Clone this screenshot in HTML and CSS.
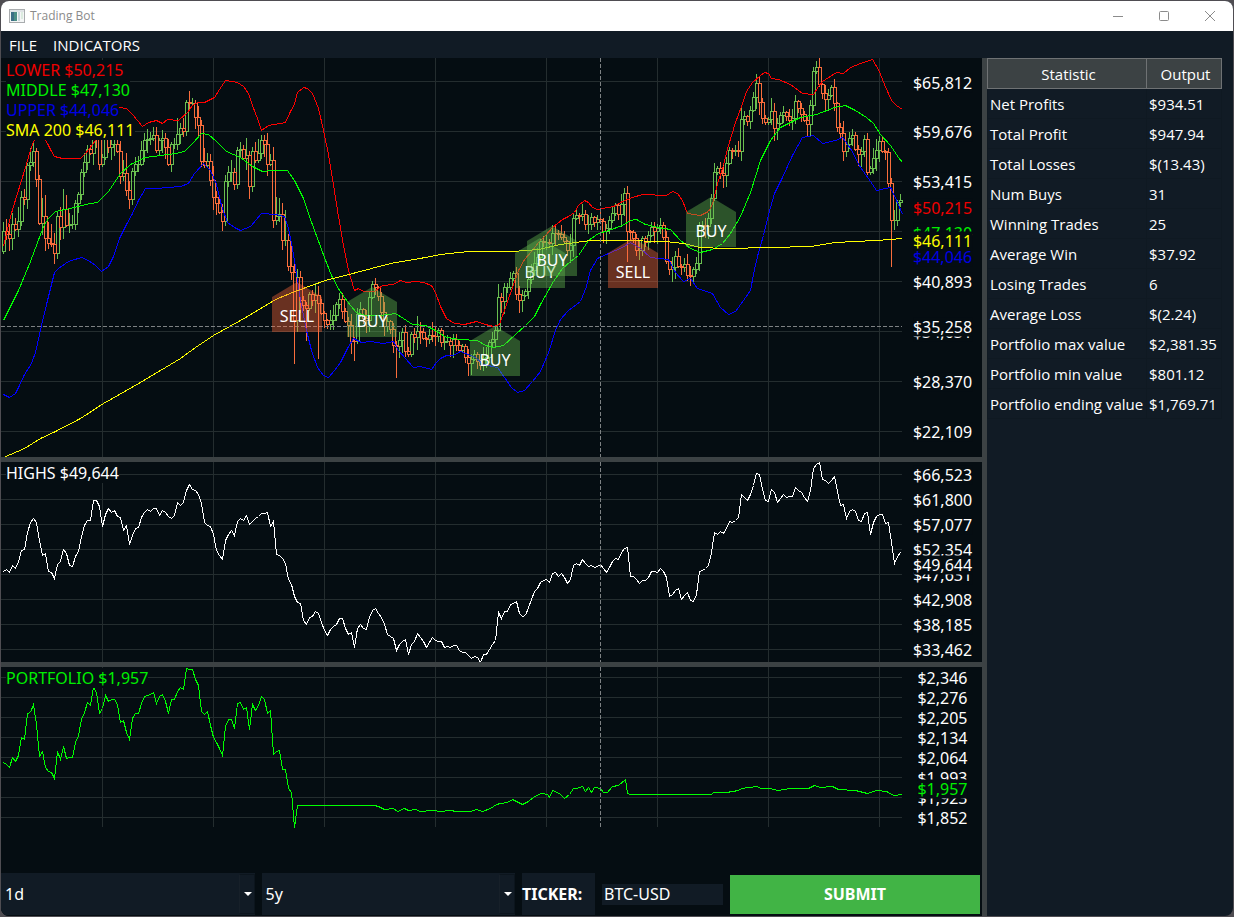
FILE: index.html
```html
<!DOCTYPE html>
<html lang="en">
<head>
<meta charset="utf-8">
<title>Trading Bot</title>
<link rel="stylesheet" href="styles.css">
</head>
<body>
<div class="window">
  <header class="titlebar">
    <svg class="app-icon" width="16" height="14" viewBox="0 0 16 14" aria-hidden="true">
      <rect x="0.5" y="0.5" width="15" height="13" fill="#f4f6f6" stroke="#a9acae"/>
      <rect x="1" y="1" width="14" height="2" fill="#dfe3e6"/>
      <rect x="2" y="3" width="6" height="9" fill="#4d8f86"/>
      <rect x="2" y="3" width="3" height="9" fill="#3c6f86"/>
      <rect x="9" y="3" width="2" height="9" fill="#c9d6dc"/>
      <rect x="12" y="3" width="2" height="7" fill="#dcebe0"/>
    </svg>
    <h1 class="title">Trading Bot</h1>
    <div class="window-buttons">
      <button class="window-button" aria-label="Minimize"><svg width="12" height="12" viewBox="0 0 12 12"><path d="M1 6.5H11"/></svg></button>
      <button class="window-button" aria-label="Maximize"><svg width="12" height="12" viewBox="0 0 12 12"><rect x="1.5" y="1.5" width="9" height="9" rx="1"/></svg></button>
      <button class="window-button" aria-label="Close"><svg width="12" height="12" viewBox="0 0 12 12"><path d="M1 1L11 11M11 1L1 11"/></svg></button>
    </div>
  </header>
  <nav class="menu">
    <button class="menu-item">FILE</button>
    <button class="menu-item">INDICATORS</button>
  </nav>
  <div class="workspace">
    <main class="charts">
      <section class="pane pane-price">
        <div class="plot" id="price">
          <div class="legend">
            <span class="red">LOWER $50,215</span>
            <span class="green">MIDDLE $47,130</span>
            <span class="blue">UPPER $44,046</span>
            <span class="yellow">SMA 200 $46,111</span>
          </div>
        </div>
        <div class="axis" id="price-axis"></div>
      </section>
      <section class="pane pane-highs">
        <div class="plot" id="highs"><div class="legend"><span>HIGHS $49,644</span></div></div>
        <div class="axis" id="highs-axis"></div>
      </section>
      <section class="pane pane-portfolio">
        <div class="plot" id="portfolio"><div class="legend"><span class="green">PORTFOLIO $1,957</span></div></div>
        <div class="axis" id="portfolio-axis"></div>
      </section>
      <form class="controls">
        <div class="picker"><select aria-label="Interval"><option>1d</option></select></div>
        <div class="picker"><select aria-label="Period"><option>5y</option></select></div>
        <label class="ticker-label" for="ticker">TICKER:</label>
        <input class="ticker" id="ticker" type="text" value="BTC-USD">
        <button class="submit" type="button">SUBMIT</button>
      </form>
    </main>
    <aside class="stats">
      <table class="stats-table">
        <thead><tr><th>Statistic</th><th>Output</th></tr></thead>
        <tbody>
          <tr><td>Net Profits</td><td>$934.51</td></tr>
          <tr><td>Total Profit</td><td>$947.94</td></tr>
          <tr><td>Total Losses</td><td>$(13.43)</td></tr>
          <tr><td>Num Buys</td><td>31</td></tr>
          <tr><td>Winning Trades</td><td>25</td></tr>
          <tr><td>Average Win</td><td>$37.92</td></tr>
          <tr><td>Losing Trades</td><td>6</td></tr>
          <tr><td>Average Loss</td><td>$(2.24)</td></tr>
          <tr><td>Portfolio max value</td><td>$2,381.35</td></tr>
          <tr><td>Portfolio min value</td><td>$801.12</td></tr>
          <tr><td>Portfolio ending value</td><td>$1,769.71</td></tr>
        </tbody>
      </table>
    </aside>
  </div>
</div>
<script src="chart.js"></script>
</body>
</html>
```
FILE: styles.css
```css
* { box-sizing: border-box; }

body {
  margin: 0;
  padding: 1px;
  background: #4f4d52;
  color: #fff;
  font-family: "Noto Sans", "Open Sans", sans-serif;
  font-size: 15px;
}

button, select, input { font: inherit; color: inherit; border: 0; border-radius: 0; }

.window {
  display: flex;
  flex-direction: column;
  height: calc(100vh - 2px);
  min-height: 600px;
  border-radius: 8px;
  overflow: hidden;
  background: #111b25;
}

.titlebar {
  display: flex;
  align-items: center;
  flex: none;
  height: 30px;
  padding-left: 8px;
  gap: 5px;
  background: #fff;
  color: #8b8b8b;
}
.title { margin: 0; font-family: "Open Sans", "Noto Sans", sans-serif; font-size: 12px; font-weight: 400; line-height: 16px; }
.window-buttons { display: flex; margin-left: auto; }
.window-button { display: grid; place-items: center; width: 46px; height: 30px; padding: 0; background: none; }
.window-button svg { fill: none; stroke: #8b8b8b; stroke-width: 1; }

.menu { display: flex; flex: none; height: 27px; }
.menu-item { padding: 1px 8px 0; line-height: 26px; background: none; font-family: "Open Sans", "Noto Sans", sans-serif; }

.workspace { display: flex; flex: 1; min-height: 0; }
.charts {
  display: flex;
  flex-direction: column;
  flex: 1;
  min-width: 0;
  background: #050d12;
  border-right: 5px solid #3c4244;
  box-sizing: content-box;
}

.pane { display: flex; min-height: 0; overflow: hidden; box-sizing: content-box; font-size: 16px; }
.pane-price { flex: 399 1 0; border-bottom: 5px solid #3c4244; }
.pane-highs { flex: 200 1 0; border-bottom: 5px solid #3c4244; }
.pane-portfolio { flex: 206 1 0; }
.plot { position: relative; flex: 1; min-width: 0; }
.plot-svg { position: absolute; width: 100%; height: 100%; shape-rendering: crispEdges; fill: none; }
.plot-svg path { vector-effect: non-scaling-stroke; }
.axis { position: relative; flex: none; width: 79px; }

.legend { position: absolute; z-index: 2; top: 1px; left: 5px; display: flex; flex-direction: column; align-items: flex-start; line-height: 20px; }
.pane-price .legend { top: 2px; }
.legend span { background: #050d12; }
.tick { position: absolute; left: 50%; height: 19px; line-height: 19px; background: #050d12; transform: translate(-50%, -50%); }

.red { color: #f00000; }
.green { color: #00f000; }
.blue { color: #0000e6; }
.yellow { color: #ffff00; }

.marker { position: absolute; width: 50px; height: 50px; padding-top: 24px; line-height: 20px; text-align: center; transform: translate(-50%, -100%); }
.marker::before { content: ""; position: absolute; inset: 0; opacity: 0.4; clip-path: polygon(50% 0, 100% 30%, 100% 100%, 0 100%, 0 30%); }
.marker.buy::before { background: #66be50; }
.marker.sell::before { background: #ff6a3a; }
.marker span { position: relative; }

.controls {
  display: grid;
  grid-template-columns: 1fr 1fr 73px 121px 250px;
  flex: none;
  gap: 7px;
  align-items: center;
  height: 43px;
  padding: 0 2px 1px 0;
  font-size: 16px;
}
.picker { position: relative; height: 42px; background: #111b25; }
.picker select { width: 100%; height: 100%; padding: 0 4px; background: none; appearance: none; }
.picker::before { content: ""; position: absolute; top: 1px; right: 0; bottom: 1px; width: 14px; border: 1px solid #0c151d; border-left-color: #172029; }
.picker::after { content: ""; position: absolute; top: 19px; right: 3px; border: 4px solid transparent; border-top-color: #fff; border-bottom: 0; pointer-events: none; }
.ticker-label { height: 42px; line-height: 42px; background: #111b25; font-weight: 700; white-space: nowrap; }
.ticker { width: 100%; height: 21px; padding: 0 2px; background: #111b25; }
.submit { height: 39px; background: #41b445; font-weight: 700; }

.stats { flex: none; width: 246px; }
.stats-table { width: 235px; border-collapse: collapse; table-layout: fixed; font-family: "Open Sans", "Noto Sans", sans-serif; }
.stats-table th { height: 30px; padding: 0 0 0 3px; border: 1px solid #6f7274; background: #3c4244; font-weight: 400; }
.stats-table th:first-child { width: 159px; }
.stats-table td { height: 30px; padding: 0 2px; border: 1px solid #0f1922; line-height: 20px; white-space: nowrap; }
```
FILE: chart.js
```js
const NS = "http://www.w3.org/2000/svg";
const X0 = 1, WIDTH = 902, STEP = 3;
const UP = "#6abf50", DOWN = "#f96d3c";
const VERTICALS = [102, 213, 324, 435, 546, 657, 768, 879];

const highs = [
  571,569,572,565,568,561,550,549,532,522, 518,522,540,555,553,571,572,578,564,561,
  549,553,565,566,556,551,536,525,520,520, 500,500,506,526,514,508,512,510,516,517,
  530,525,544,535,528,527,517,512,509,511, 508,508,515,510,512,516,518,515,502,505,
  502,490,484,489,490,494,503,522,525,526, 534,550,555,559,540,534,530,535,521,518,
  520,515,524,521,518,516,513,513,512,526, 521,554,555,558,563,579,584,596,602,603,
  620,624,617,616,611,613,622,630,635,629, 626,624,618,618,628,634,632,647,628,624,
  628,629,617,610,608,613,617,624,634,636, 638,650,644,641,639,654,644,641,633,637,
  641,647,642,637,640,641,641,647,646,647, 645,645,650,652,652,655,658,656,657,662,
  654,654,649,644,640,612,618,611,611,604, 603,601,613,616,615,607,599,591,588,582,
  580,579,582,573,572,576,573,577,583,579, 565,563,565,559,563,566,565,567,566,564,
  568,572,567,561,558,559,552,548,547,576, 576,579,583,580,580,577,571,571,572,568,
  571,577,596,594,590,588,599,595,592,600, 601,594,571,570,568,565,552,532,534,531,
  533,528,521,522,520,517,494,497,500,494, 485,473,474,489,500,501,489,492,502,498,
  494,497,496,496,487,490,492,497,501,490, 468,464,462,479,480,483,480,476,491,505,
  504,518,511,509,511,520,521,513,512,534, 522,516,514,514,523,522,542,563,556,552
];

const held = [
  762,764,767,757,761,755,737,739,713,712, 704,724,756,751,767,771,772,778,751,759,
  746,758,757,757,742,735,719,712,702,705, 687,692,713,708,695,701,699,699,704,722,
  720,732,739,718,713,713,703,696,695,694, 692,703,696,694,701,713,699,699,691,687,
  689,668,669,669,679,685,711,714,711,725, 737,742,748,755,726,719,719,728,703,702,
  709,707,729,704,710,705,696,699,713,710, 754,751,750,769,769,788,792,827,805
];

const portfolioTail = [
  374,805, 378,806, 384,809, 393,808, 397,811, 404,808, 408,810, 415,809, 420,811,
  432,810, 440,811, 450,810, 456,811, 470,811, 476,809, 482,811, 490,808, 496,804,
  500,803, 507,802, 512,799, 518,802, 522,804, 528,801, 534,796, 541,793, 547,794,
  549,797, 552,790, 559,793, 564,798, 569,794, 573,788, 576,788, 582,786, 585,791,
  588,787, 591,792, 594,787, 600,788, 603,792, 607,792, 612,786, 618,785, 625,779,
  627,793, 630,794, 711,794, 713,792, 726,792, 738,790, 741,788, 757,786, 760,788,
  770,788, 777,790, 790,788, 808,788, 814,785, 820,787, 832,786, 838,789, 855,790,
  867,793, 876,790, 886,791, 893,795, 902,794
];

const upperBand = [
  3,246, 10,216, 16,196, 21,180, 25,167, 29,153, 33,141, 36,137, 44,138, 47,143, 50,149,
  54,156, 62,158, 80,158, 85,153, 92,144, 98,136, 105,122, 112,110, 118,107, 126,108,
  132,114, 142,126, 148,122, 156,120, 162,123, 167,119, 178,120, 187,112, 192,105,
  197,102, 204,102, 214,97, 219,89, 225,80, 237,82, 243,86, 248,93, 252,105, 257,118,
  261,130, 268,125, 285,122, 290,111, 294,104, 297,92, 303,87, 307,88, 312,93, 318,108,
  323,130, 328,154, 332,178, 337,210, 343,245, 348,270, 354,290, 358,288, 363,291,
  374,291, 382,285, 393,284, 400,280, 406,282, 415,281, 423,282, 431,285, 435,292,
  440,306, 446,318, 454,323, 464,324, 476,321, 485,324, 493,326, 499,324, 506,304,
  512,287, 518,270, 524,259, 532,250, 538,242, 545,235, 552,227, 562,219, 568,216,
  574,212, 578,205, 584,200, 588,202, 592,207, 597,209, 613,206, 622,201, 632,197,
  642,194, 666,195, 672,191, 677,193, 682,200, 687,213, 700,215, 708,211, 712,204,
  718,180, 723,165, 728,145, 735,122, 741,106, 746,91, 752,82, 760,75, 764,72, 768,73,
  771,78, 778,79, 790,84, 802,93, 813,94, 818,86, 822,81, 836,72, 843,73, 850,67,
  860,63, 872,59, 878,69, 884,84, 891,100, 896,105, 902,109
];
const middleBand = [
  3,320, 18,290, 30,261, 40,234, 44,224, 48,218, 55,211, 70,208, 85,204, 97,202,
  108,191, 120,173, 130,164, 145,157, 160,155, 175,153, 184,151, 192,143, 201,133,
  208,134, 216,141, 226,151, 240,157, 252,166, 262,171, 272,170, 287,170, 294,180,
  303,198, 309,216, 317,238, 324,257, 331,275, 339,290, 350,305, 356,312, 365,315,
  380,315, 395,313, 403,318, 412,324, 425,325, 435,330, 446,337, 460,339, 477,340,
  485,345, 493,347, 503,345, 515,334, 525,325, 534,316, 540,304, 553,281, 562,268,
  570,261, 578,255, 588,240, 598,233, 608,230, 622,225, 630,220, 636,219, 645,224,
  658,227, 670,229, 680,240, 690,248, 700,252, 712,249, 722,243, 730,233, 740,216,
  750,192, 760,160, 770,140, 780,127, 800,117, 816,114, 834,107, 845,105, 855,110,
  866,117, 873,123, 880,134, 890,145, 898,157, 902,162
];
const lowerBand = [
  3,394, 9,397, 15,393, 19,385, 24,374, 31,363, 35,352, 41,325, 47,300, 54,272, 58,268,
  68,261, 81,257, 88,260, 95,265, 101,271, 108,266, 113,256, 119,238, 126,224, 132,213,
  138,200, 145,188, 155,188, 180,186, 188,183, 194,173, 203,163, 210,170, 216,184,
  221,205, 227,222, 234,227, 240,230, 250,226, 261,213, 275,214, 284,216, 288,228,
  292,248, 295,267, 300,300, 306,330, 311,350, 317,367, 323,375, 328,377, 334,370,
  340,362, 347,348, 353,338, 361,342, 370,341, 383,343, 393,341, 398,350, 405,358,
  413,367, 420,366, 431,369, 436,362, 440,358, 446,355, 453,355, 460,351, 475,357,
  483,364, 497,367, 504,377, 511,387, 517,392, 524,390, 532,381, 540,371, 548,352,
  555,330, 560,319, 568,310, 580,301, 586,286, 590,270, 597,258, 608,253, 622,247,
  630,242, 640,248, 650,257, 668,259, 675,272, 683,281, 690,278, 697,288, 712,293,
  720,307, 728,314, 735,311, 743,300, 750,290, 754,269, 758,252, 763,235, 770,207,
  774,193, 782,177, 792,155, 802,137, 813,135, 822,143, 835,140, 842,137, 850,148,
  860,167, 868,178, 876,190, 890,187, 897,202, 902,214
];
const sma200 = [
  3,457, 24,448, 40,438, 55,431, 80,418, 103,403, 133,386, 160,370, 180,358, 195,347,
  213,335, 240,320, 262,307, 275,299, 297,290, 325,280, 356,272, 390,263, 425,257,
  440,254, 468,251, 512,251, 538,249, 560,244, 590,240, 620,240, 665,241, 683,243,
  700,247, 725,248, 770,247, 810,246, 835,242, 875,240, 890,239, 902,238
];

const series = ys => ys.flatMap((y, i) => [STEP * (i + 1), y]);

function linePath(points) {
  let d = "";
  for (let i = 0; i < points.length; i += 2) {
    d += (i ? "L" : "M") + (points[i] + 0.5) + " " + (points[i + 1] + 0.5);
  }
  return d;
}

function addPath(svg, d, color, dash) {
  const path = document.createElementNS(NS, "path");
  path.setAttribute("d", d);
  path.setAttribute("stroke", color);
  if (dash) path.setAttribute("stroke-dasharray", dash);
  svg.append(path);
}

function createPlot(id, top, height, gridTop, gridStep, gridBottom) {
  const svg = document.createElementNS(NS, "svg");
  svg.setAttribute("class", "plot-svg");
  svg.setAttribute("viewBox", `${X0} ${top} ${WIDTH} ${height}`);
  svg.setAttribute("preserveAspectRatio", "none");
  let d = VERTICALS.map(x => `M${x + 0.5} ${top}V${gridBottom}`).join("");
  for (let y = gridTop; y < gridBottom; y += gridStep) d += `M${X0} ${y + 0.5}H902`;
  addPath(svg, d, "#242d2f");
  document.getElementById(id).prepend(svg);
  return svg;
}

function addTicks(id, top, height, ticks) {
  const axis = document.getElementById(id);
  for (const [y, text, color] of ticks) {
    const tick = document.createElement("span");
    tick.className = "tick " + (color || "");
    tick.textContent = text;
    tick.style.top = (y - top) / height * 100 + "%";
    axis.append(tick);
  }
}

function candlePaths() {
  const high = highs.map(h => 76.3 + 1.509 * (h - 474.3));
  const wobble = i => ((i * 37 + i * i * 11) % 17) / 17;
  const lows = { 17: 264, 73: 231, 97: 364, 101: 341, 105: 359, 117: 361, 131: 378, 208: 262, 296: 267 };
  const closes = high.map((h, i) => {
    if (i < held.length - 1) return Math.max(h + 2, 102 + (held[i] - 668) * 1.37);
    const next = high[Math.min(i + 1, high.length - 1)];
    return Math.max(h + 2, next + 1) + wobble(i) * 9;
  });
  const paths = { [UP]: "", [DOWN]: "" };
  high.forEach((h, i) => {
    const x = STEP * (i + 1), close = closes[i];
    const open = Math.max(i ? closes[i - 1] : close + 20, h + 1);
    const color = close <= open ? UP : DOWN;
    const top = Math.round(Math.min(open, close)), bottom = Math.round(Math.max(open, close));
    const low = Math.round(lows[i] || bottom + 2 + wobble(i + 5) * 12);
    paths[color] += `M${x + 0.5} ${Math.round(h)}V${top}M${x + 0.5} ${bottom}V${low}`
      + `M${x - 0.5} ${top + 0.5}H${x + 2.5}V${bottom + 0.5}H${x - 0.5}Z`;
  });
  return paths;
}

const price = createPlot("price", 58, 399, 81, 50, 457);
for (const [color, d] of Object.entries(candlePaths())) addPath(price, d, color);
addPath(price, linePath(upperBand), "#f00");
addPath(price, linePath(middleBand), "#0f0");
addPath(price, linePath(lowerBand), "#00f");
addPath(price, linePath(sma200), "#ff0");
addPath(price, "M600.5 58V457", "#7d8183", "4 2");
addPath(price, "M1 326.5H902", "#7d8183", "4 2");

const highsPlot = createPlot("highs", 462, 200, 474, 25, 662);
addPath(highsPlot, linePath(series(highs)), "#fff");
addPath(highsPlot, "M600.5 462V662", "#7d8183", "4 2");

const portfolioPlot = createPlot("portfolio", 667, 206, 677, 20, 827);
addPath(portfolioPlot, linePath([...series(held), ...portfolioTail]), "#0f0");
addPath(portfolioPlot, "M600.5 667V827", "#7d8183", "4 2");

const signals = [
  ["SELL", 297, 332], ["BUY", 372, 337], ["BUY", 495, 376], ["BUY", 540, 288],
  ["BUY", 552, 276], ["SELL", 633, 288], ["BUY", 711, 247]
];
for (const [side, x, y] of signals) {
  const marker = document.createElement("div");
  const label = document.createElement("span");
  marker.className = "marker " + side.toLowerCase();
  label.textContent = side;
  marker.append(label);
  marker.style.left = (x - X0) / WIDTH * 100 + "%";
  marker.style.top = (y - 58) / 399 * 100 + "%";
  document.getElementById("price").append(marker);
}

addTicks("price-axis", 58, 399, [
  [83, "$65,812"], [132, "$59,676"], [182, "$53,415"], [232, "$47,154"], [282, "$40,893"],
  [332, "$34,631"], [382, "$28,370"], [432, "$22,109"], [208, "$50,215", "red"],
  [233, "$47,130", "green"], [257, "$44,046", "blue"], [241, "$46,111", "yellow"],
  [327, "$35,258"]
]);
addTicks("highs-axis", 462, 200, [
  [475, "$66,523"], [500, "$61,800"], [525, "$57,077"], [550, "$52,354"], [575, "$47,631"],
  [600, "$42,908"], [625, "$38,185"], [650, "$33,462"], [565, "$49,644"]
]);
addTicks("portfolio-axis", 667, 206, [
  [678, "$2,346"], [698, "$2,276"], [718, "$2,205"], [738, "$2,134"], [758, "$2,064"],
  [778, "$1,993"], [798, "$1,923"], [818, "$1,852"], [789, "$1,957", "green"]
]);
```
